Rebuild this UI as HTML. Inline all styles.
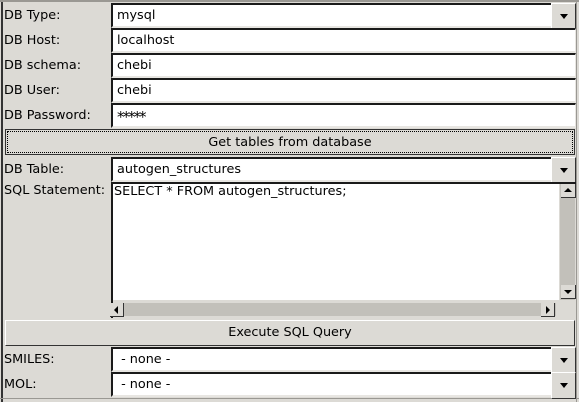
<!DOCTYPE html>
<html><head><style>
body{margin:0;width:579px;height:402px;background:#dcdad5;position:relative;overflow:hidden;font-family:"DejaVu Sans","Liberation Sans",sans-serif;font-size:12.8px;color:#000}
.a{position:absolute}
.lbl{position:absolute;left:4px;line-height:14px}
.f{position:absolute;left:111px;width:465px;height:25px;box-sizing:border-box;background:#fff;border-top:2px solid #1a1a1a;border-left:2px solid #1a1a1a;border-right:1px solid #e8e6e2;border-bottom:2px solid #e8e6e2;padding-left:4px;line-height:21px}
.dd{position:absolute;right:-1px;top:-2px;width:25px;height:27px;box-sizing:border-box;background:#dcdad5;border:1px solid #fff;border-right-color:#333;border-bottom-color:#333}
.dd:after{content:"";position:absolute;left:8px;top:10px;border-left:4px solid transparent;border-right:4px solid transparent;border-top:5px solid #000}
.btn{position:absolute;left:5px;width:570px;box-sizing:border-box;background:#dcdad5;border:1px solid #fff;border-right-color:#333;border-bottom-color:#333;text-align:center}
</style></head><body>
<div class="a" style="left:1px;top:0;width:2px;height:402px;background:#333"></div>
<div class="a" style="left:0;top:0;width:579px;height:2px;background:#9a9893"></div>
<div class="a" style="left:576px;top:0;width:1px;height:402px;background:#9a9893"></div>
<div class="a" style="left:0;top:398px;width:579px;height:1px;background:#9a9893"></div>

<div class="lbl" style="top:9px">DB Type:</div>
<div class="f" style="top:3px">mysql<div class="dd"></div></div>
<div class="lbl" style="top:34px">DB Host:</div>
<div class="f" style="top:28px">localhost</div>
<div class="lbl" style="top:59px">DB schema:</div>
<div class="f" style="top:53px">chebi</div>
<div class="lbl" style="top:84px">DB User:</div>
<div class="f" style="top:78px">chebi</div>
<div class="lbl" style="top:109px">DB Password:</div>
<div class="f" style="top:103px;font-size:15px;letter-spacing:-2px;line-height:24px">*****</div>

<div class="btn" style="top:129px;height:26px;border-color:#333 #333 #333 #333;border-width:1px">
<div style="position:absolute;inset:1px;border:1px dotted #000;line-height:21px">Get tables from database</div></div>

<div class="lbl" style="top:163px">DB Table:</div>
<div class="f" style="top:157px">autogen_structures<div class="dd"></div></div>
<div class="lbl" style="top:184px">SQL Statement:</div>
<div class="a" style="left:111px;top:182px;width:465px;height:136px;box-sizing:border-box;border-top:2px solid #1a1a1a;border-left:2px solid #1a1a1a;background:#dcdad5"></div>
<div class="a" style="left:113px;top:184px;width:446px;height:116px;background:#fff;padding-left:1px;line-height:16px;box-sizing:border-box">SELECT * FROM autogen_structures;</div>
<div class="a" style="left:560px;top:184px;width:15px;height:116px;background:#c2c0ba"></div>
<div class="a" style="left:561px;top:184px;width:14px;height:13px;background:#dcdad5;border-right:1px solid #333;border-bottom:1px solid #333"><div style="position:absolute;left:3px;top:4px;border-left:4px solid transparent;border-right:4px solid transparent;border-bottom:4px solid #000"></div></div>
<div class="a" style="left:561px;top:285px;width:14px;height:13px;background:#dcdad5;border-right:1px solid #333;border-bottom:1px solid #333"><div style="position:absolute;left:3px;top:5px;border-left:4px solid transparent;border-right:4px solid transparent;border-top:4px solid #000"></div></div>
<div class="a" style="left:113px;top:303px;width:443px;height:13px;background:#c2c0ba"></div>
<div class="a" style="left:110px;top:303px;width:13px;height:13px;background:#dcdad5;border-right:1px solid #333;border-bottom:1px solid #333"><div style="position:absolute;left:4px;top:3px;border-top:4px solid transparent;border-bottom:4px solid transparent;border-right:4px solid #000"></div></div>
<div class="a" style="left:541px;top:303px;width:13px;height:13px;background:#dcdad5;border-right:1px solid #333;border-bottom:1px solid #333"><div style="position:absolute;left:5px;top:3px;border-top:4px solid transparent;border-bottom:4px solid transparent;border-left:4px solid #000"></div></div>

<div class="btn" style="top:320px;height:26px;line-height:24px">Execute SQL Query</div>

<div class="lbl" style="top:353px">SMILES:</div>
<div class="f" style="top:347px">&nbsp;- none -<div class="dd"></div></div>
<div class="lbl" style="top:378px">MOL:</div>
<div class="f" style="top:372px">&nbsp;- none -<div class="dd"></div></div>
</body></html>
